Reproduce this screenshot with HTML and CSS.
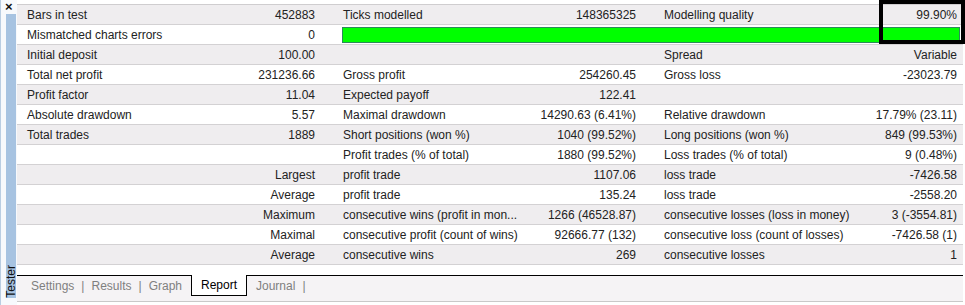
FILE: index.html
```html
<!DOCTYPE html>
<html lang="en">
  <head>
    <meta charset="UTF-8" />
    <meta name="viewport" content="width=device-width, initial-scale=1.0" />
    <link rel="stylesheet" href="styles.css">
    <title>Tester - Report</title>
  </head>
  <body>
    <div class="window">
      <div class="side">
        <span class="close">&times;</span>
        <div class="band"><span class="caption">Tester</span></div>
      </div>

      <div class="main">
        <div class="report">
          <div class="row">
            <div class="cell"><span>Bars in test</span><span>452883</span></div>
            <div class="cell"><span>Ticks modelled</span><span>148365325</span></div>
            <div class="cell"><span>Modelling quality</span><span>99.90%</span></div>
          </div>
          <div class="row">
            <div class="cell"><span>Mismatched charts errors</span><span>0</span></div>
            <div class="bar"></div>
          </div>
          <div class="row">
            <div class="cell"><span>Initial deposit</span><span>100.00</span></div>
            <div class="cell"></div>
            <div class="cell"><span>Spread</span><span>Variable</span></div>
          </div>
          <div class="row">
            <div class="cell"><span>Total net profit</span><span>231236.66</span></div>
            <div class="cell"><span>Gross profit</span><span>254260.45</span></div>
            <div class="cell"><span>Gross loss</span><span>-23023.79</span></div>
          </div>
          <div class="row">
            <div class="cell"><span>Profit factor</span><span>11.04</span></div>
            <div class="cell"><span>Expected payoff</span><span>122.41</span></div>
            <div class="cell"></div>
          </div>
          <div class="row">
            <div class="cell"><span>Absolute drawdown</span><span>5.57</span></div>
            <div class="cell"><span>Maximal drawdown</span><span>14290.63 (6.41%)</span></div>
            <div class="cell"><span>Relative drawdown</span><span>17.79% (23.11)</span></div>
          </div>
          <div class="row">
            <div class="cell"><span>Total trades</span><span>1889</span></div>
            <div class="cell"><span>Short positions (won %)</span><span>1040 (99.52%)</span></div>
            <div class="cell"><span>Long positions (won %)</span><span>849 (99.53%)</span></div>
          </div>
          <div class="row">
            <div class="cell"></div>
            <div class="cell"><span>Profit trades (% of total)</span><span>1880 (99.52%)</span></div>
            <div class="cell"><span>Loss trades (% of total)</span><span>9 (0.48%)</span></div>
          </div>
          <div class="row">
            <div class="cell"><span></span><span>Largest</span></div>
            <div class="cell"><span>profit trade</span><span>1107.06</span></div>
            <div class="cell"><span>loss trade</span><span>-7426.58</span></div>
          </div>
          <div class="row">
            <div class="cell"><span></span><span>Average</span></div>
            <div class="cell"><span>profit trade</span><span>135.24</span></div>
            <div class="cell"><span>loss trade</span><span>-2558.20</span></div>
          </div>
          <div class="row">
            <div class="cell"><span></span><span>Maximum</span></div>
            <div class="cell"><span>consecutive wins (profit in mon...</span><span>1266 (46528.87)</span></div>
            <div class="cell"><span>consecutive losses (loss in money)</span><span>3 (-3554.81)</span></div>
          </div>
          <div class="row">
            <div class="cell"><span></span><span>Maximal</span></div>
            <div class="cell"><span>consecutive profit (count of wins)</span><span>92666.77 (132)</span></div>
            <div class="cell"><span>consecutive loss (count of losses)</span><span>-7426.58 (1)</span></div>
          </div>
          <div class="row">
            <div class="cell"><span></span><span>Average</span></div>
            <div class="cell"><span>consecutive wins</span><span>269</span></div>
            <div class="cell"><span>consecutive losses</span><span>1</span></div>
          </div>
        </div>

        <div class="tabs">
          <span class="tab">Settings</span><span class="sep">|</span>
          <span class="tab">Results</span><span class="sep">|</span>
          <span class="tab">Graph</span>
          <span class="tab active">Report</span>
          <span class="tab">Journal</span><span class="sep">|</span>
        </div>
      </div>

      <div class="highlight"></div>
    </div>
  </body>
</html>
```

FILE: styles.css
```css
* {
  box-sizing: border-box;
  font-family: "Liberation Sans", Arial, sans-serif;
}
body {
  margin: 0;
  background: #fff;
  color: #222;
  font-size: 12px;
}

.window {
  position: relative;
  width: 965px;
  height: 305px;
  display: flex;
  overflow: hidden;
}

/* docked panel strip on the left */
.side {
  width: 17px;
  flex: none;
  display: flex;
  flex-direction: column;
  padding: 0 1px 7px 5px;
  border-left: 1px solid #b9cde2;
  background: #f7f9fc;
}
.close {
  height: 14px;
  margin-left: -1px;
  font-size: 13px;
  font-weight: bold;
  line-height: 14px;
  color: #111;
}
.band {
  flex: 1;
  display: flex;
  align-items: flex-end;
  background: #a7c3e1;
}
.caption {
  writing-mode: vertical-rl;
  transform: rotate(180deg);
  padding: 0 0 2px 0;
  line-height: 11px;
  font-size: 12px;
  color: #111;
}

.main {
  flex: 1;
  display: flex;
  flex-direction: column;
  padding-top: 4px;
  padding-right: 2px;
}

.report {
  height: 271px;
  border-top: 1px solid #cfcdcf;
}
.row {
  display: grid;
  grid-template-columns: 316px 320px 310px;
  height: 20px;
  border-bottom: 1px solid #d3d1d3;
  background: #fff;
}
.row:nth-child(odd) {
  background: #efedef;
}
.cell {
  display: flex;
  justify-content: space-between;
  align-items: center;
  padding: 0 18px 0 10px;
  white-space: nowrap;
}
.cell:nth-child(2) {
  padding-right: 17px;
}
.cell:nth-child(3) {
  padding: 0 6px 0 11px;
}
.bar {
  grid-column: 2 / 4;
  margin: 2px 3px 1px 9px;
  background: #00ff00;
  border: 1px solid #2a8a5a;
}

.tabs {
  height: 27px;
  display: flex;
  align-items: flex-start;
  padding-left: 14px;
  border-top: 1px solid #000;
  border-bottom: 1px solid #c9c9c9;
  background: #f5f3f5;
  color: #7f7f7f;
}
.tab {
  line-height: 19px;
  margin-top: 1px;
}
.sep {
  line-height: 19px;
  margin: 1px 7px 0 7px;
}
.tab.active {
  margin: -1px 9px 0 9px;
  padding: 1px 9px 0 9px;
  height: 21px;
  background: #fff;
  color: #000;
  border: 1px solid #000;
  border-top: none;
}

/* marker drawn over the quality cell */
.highlight {
  position: absolute;
  left: 879px;
  top: 0;
  width: 86px;
  height: 44px;
  border: 4px solid #000;
}
```
